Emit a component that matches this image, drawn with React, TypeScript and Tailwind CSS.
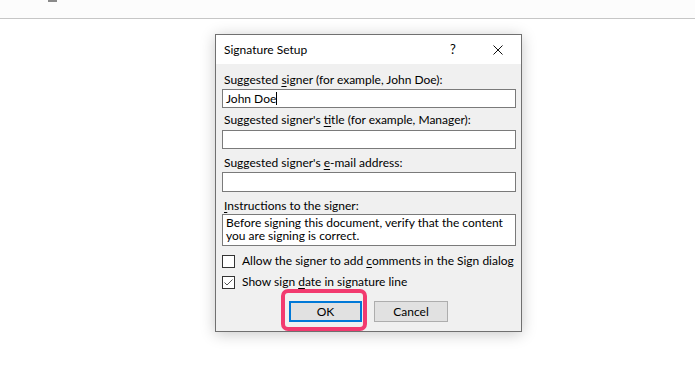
import React from 'react'

const FONT = { fontFamily: 'Lato, "Noto Sans", sans-serif' }

function Label({ before, u, after }: { before: string; u: string; after: string }) {
  return (
    <div className="h-[16px] leading-[16px] pl-[2px] text-[12px] text-black whitespace-nowrap">
      {before}
      <span className="underline underline-offset-2">{u}</span>
      {after}
    </div>
  )
}

function Field({ value, className = '' }: { value?: string; className?: string }) {
  return (
    <div className={`h-[19px] w-[294px] bg-white border border-[#7a7a7a] px-[3px] text-[12px] leading-[17px] text-black ${className}`}>
      {value}
      {value && <span className="inline-block w-px h-[13px] bg-black align-[-2px]" />}
    </div>
  )
}

function Check({ checked, children }: { checked?: boolean; children: React.ReactNode }) {
  return (
    <div className="flex items-center h-[16px] text-[12px] text-black whitespace-nowrap">
      <div className="shrink-0 w-[13px] h-[13px] border border-[#333] bg-white flex items-center justify-center">
        {checked && (
          <svg width="11" height="11" viewBox="0 0 11 11">
            <path d="M1.5 5.5 L4 8 L9.5 2.5" fill="none" stroke="#555" strokeWidth="1" />
          </svg>
        )}
      </div>
      <span className="ml-[7px]">{children}</span>
    </div>
  )
}

export default function App() {
  return (
    <div className="w-[695px] h-[385px] bg-white overflow-hidden" style={FONT}>
      <div className="h-[19px] bg-[#fcfcfc] border-b border-[#c6c6c6]">
        <div className="ml-[48px] w-[9px] h-[2px] bg-[#8a8a8a]" />
      </div>

      <div className="mt-[15px] ml-[215px] w-[307px] h-[298px] border border-[#707070] bg-[#f0f0f0] shadow-[0_2px_14px_rgba(0,0,0,0.22)] flex flex-col">
        <div className="h-[29px] bg-white flex items-center pl-[8px] text-[12px] text-black">
          <span className="flex-1">Signature Setup</span>
          <span className="w-[14px] text-center mr-[33px] text-[13px]">?</span>
          <svg width="10" height="10" viewBox="0 0 10 10" className="mr-[18px]">
            <path d="M0.5 0.5 L9.5 9.5 M9.5 0.5 L0.5 9.5" stroke="#111" strokeWidth="1" />
          </svg>
        </div>

        <div className="flex flex-col pl-[6px] pt-[8px]">
          <Label before="Suggested " u="s" after="igner (for example, John Doe):" />
          <Field value="John Doe" className="mt-[1px]" />

          <div className="mt-[4px]">
            <Label before="Suggested signer's " u="t" after="itle (for example, Manager):" />
          </div>
          <Field className="mt-[2px]" />

          <div className="mt-[6px]">
            <Label before="Suggested signer's " u="e" after="-mail address:" />
          </div>
          <Field className="mt-[1px] h-[20px]" />

          <div className="mt-[6px]">
            <Label before="" u="I" after="nstructions to the signer:" />
          </div>
          <div className="mt-[0px] h-[32px] w-[294px] bg-white border border-[#7a7a7a] px-[3px] pt-[1px] text-[12px] leading-[13px] text-black">
            Before signing this document, verify that the content you are signing is correct.
          </div>

          <div className="mt-[7px]">
            <Check>
              Allow the signer to add <span className="underline underline-offset-2">c</span>omments in the Sign dialog
            </Check>
          </div>
          <div className="mt-[5px]">
            <Check checked>
              Show sign <span className="underline underline-offset-2">d</span>ate in signature line
            </Check>
          </div>

          <div className="mt-[11px] flex justify-center gap-[12px] pr-[6px] text-[12px] text-black">
            <div className="relative">
              <div className="w-[73px] h-[21px] bg-[#e1e1e1] border-2 border-[#0078d7] flex items-center justify-center">
                OK
              </div>
              <div className="absolute left-[-8px] right-[-5px] top-[-12px] bottom-[-9px] border-[4px] border-[#f23a6f] rounded-[7px]" />
            </div>
            <div className="w-[74px] h-[21px] bg-[#e1e1e1] border border-[#adadad] flex items-center justify-center">
              Cancel
            </div>
          </div>
        </div>
      </div>
    </div>
  )
}
